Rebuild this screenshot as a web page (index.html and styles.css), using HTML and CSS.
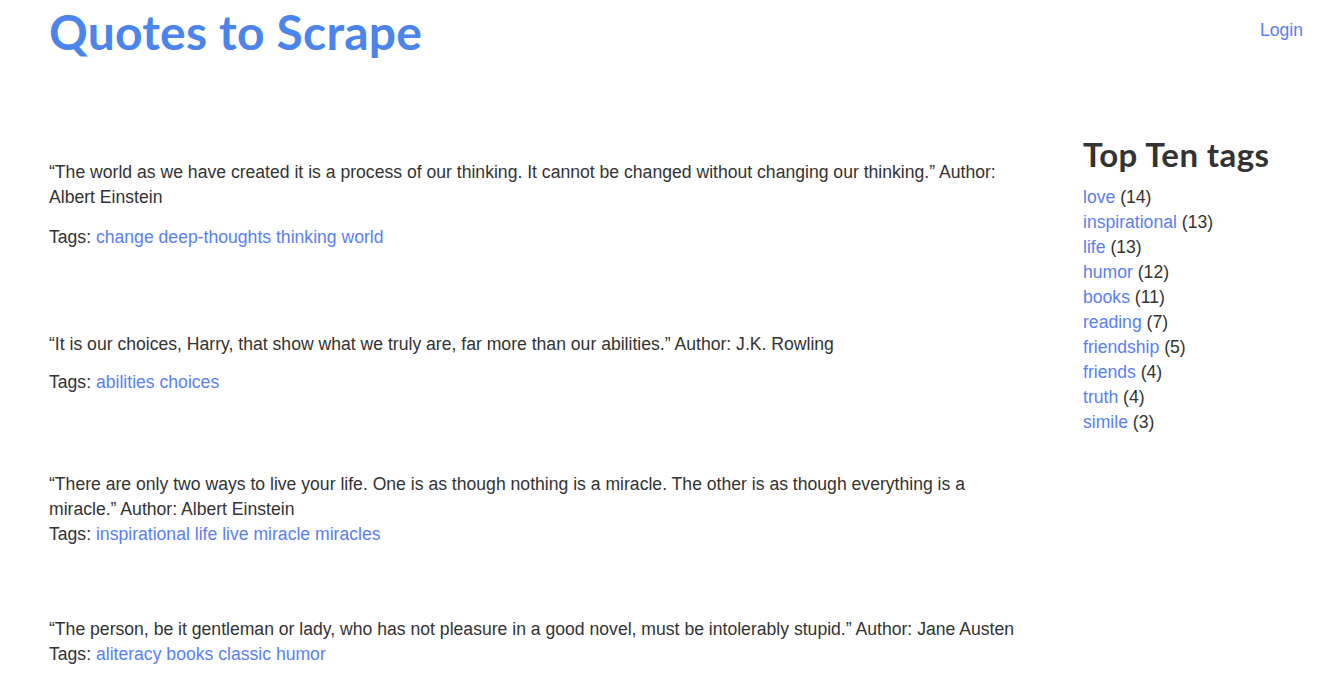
FILE: index.html
```html
<!DOCTYPE html>
<html lang="en">
<head>
<meta charset="utf-8">
<title>Quotes to Scrape</title>
<link rel="stylesheet" href="styles.css">
</head>
<body>
<div class="page">
  <header class="header">
    <h1 class="brand"><a href="#">Quotes to Scrape</a></h1>
    <a class="login" href="#">Login</a>
  </header>
  <div class="layout">
    <main class="quotes">
      <div class="quote q1">
        <p class="text">“The world as we have created it is a process of our thinking. It cannot be changed without changing our thinking.” Author: Albert Einstein</p>
        <p class="tags gap">Tags: <a href="#">change</a> <a href="#">deep-thoughts</a> <a href="#">thinking</a> <a href="#">world</a></p>
      </div>
      <div class="quote q2">
        <p class="text">“It is our choices, Harry, that show what we truly are, far more than our abilities.” Author: J.K. Rowling</p>
        <p class="tags gap2">Tags: <a href="#">abilities</a> <a href="#">choices</a></p>
      </div>
      <div class="quote q3">
        <p class="text">“There are only two ways to live your life. One is as though nothing is a miracle. The other is as though everything is a miracle.” Author: Albert Einstein</p>
        <p class="tags">Tags: <a href="#">inspirational</a> <a href="#">life</a> <a href="#">live</a> <a href="#">miracle</a> <a href="#">miracles</a></p>
      </div>
      <div class="quote q4">
        <p class="text">“The person, be it gentleman or lady, who has not pleasure in a good novel, must be intolerably stupid.” Author: Jane Austen</p>
        <p class="tags">Tags: <a href="#">aliteracy</a> <a href="#">books</a> <a href="#">classic</a> <a href="#">humor</a></p>
      </div>
    </main>
    <aside class="sidebar">
      <h2 class="side-title">Top Ten tags</h2>
      <ul class="tag-list">
        <li><a href="#">love</a> (14)</li>
        <li><a href="#">inspirational</a> (13)</li>
        <li><a href="#">life</a> (13)</li>
        <li><a href="#">humor</a> (12)</li>
        <li><a href="#">books</a> (11)</li>
        <li><a href="#">reading</a> (7)</li>
        <li><a href="#">friendship</a> (5)</li>
        <li><a href="#">friends</a> (4)</li>
        <li><a href="#">truth</a> (4)</li>
        <li><a href="#">simile</a> (3)</li>
      </ul>
    </aside>
  </div>
</div>
</body>
</html>
```

FILE: styles.css
```css
html, body {
  margin: 0;
  padding: 0;
  background: #ffffff;
}
body {
  font-family: "Liberation Sans", Arial, sans-serif;
  font-size: 17.6px;
  line-height: 25px;
  color: #333333;
}
a {
  color: #5a80f0;
  text-decoration: none;
}
.page {
  padding: 0 40px 0 49px;
}
.header {
  display: flex;
  justify-content: space-between;
  align-items: flex-start;
  height: 130px;
}
.brand {
  margin: 0;
  padding-top: 7px;
  font-family: Lato, "Open Sans", sans-serif;
  font-weight: 700;
  font-size: 48px;
  line-height: 50px;
  letter-spacing: 0.2px;
}
.brand a {
  color: #4a84ec;
}
.login {
  margin-top: 18px;
}
.layout {
  display: flex;
  align-items: flex-start;
}
.quotes {
  width: 980px;
  padding-top: 30px;
}
.quote p {
  margin: 0;
}
.tags.gap {
  margin-top: 15px;
}
.tags.gap2 {
  margin-top: 13px;
}
.q2 { margin-top: 82px; }
.q3 { margin-top: 77px; }
.q4 { margin-top: 70px; }
.sidebar {
  margin-left: 54px;
}
.side-title {
  margin: 0 0 11px;
  padding-top: 4px;
  font-family: Lato, "Open Sans", sans-serif;
  font-weight: 700;
  font-size: 33px;
  line-height: 40px;
  letter-spacing: 0.4px;
  color: #333333;
}
.tag-list {
  list-style: none;
  margin: 0;
  padding: 0;
}
```
